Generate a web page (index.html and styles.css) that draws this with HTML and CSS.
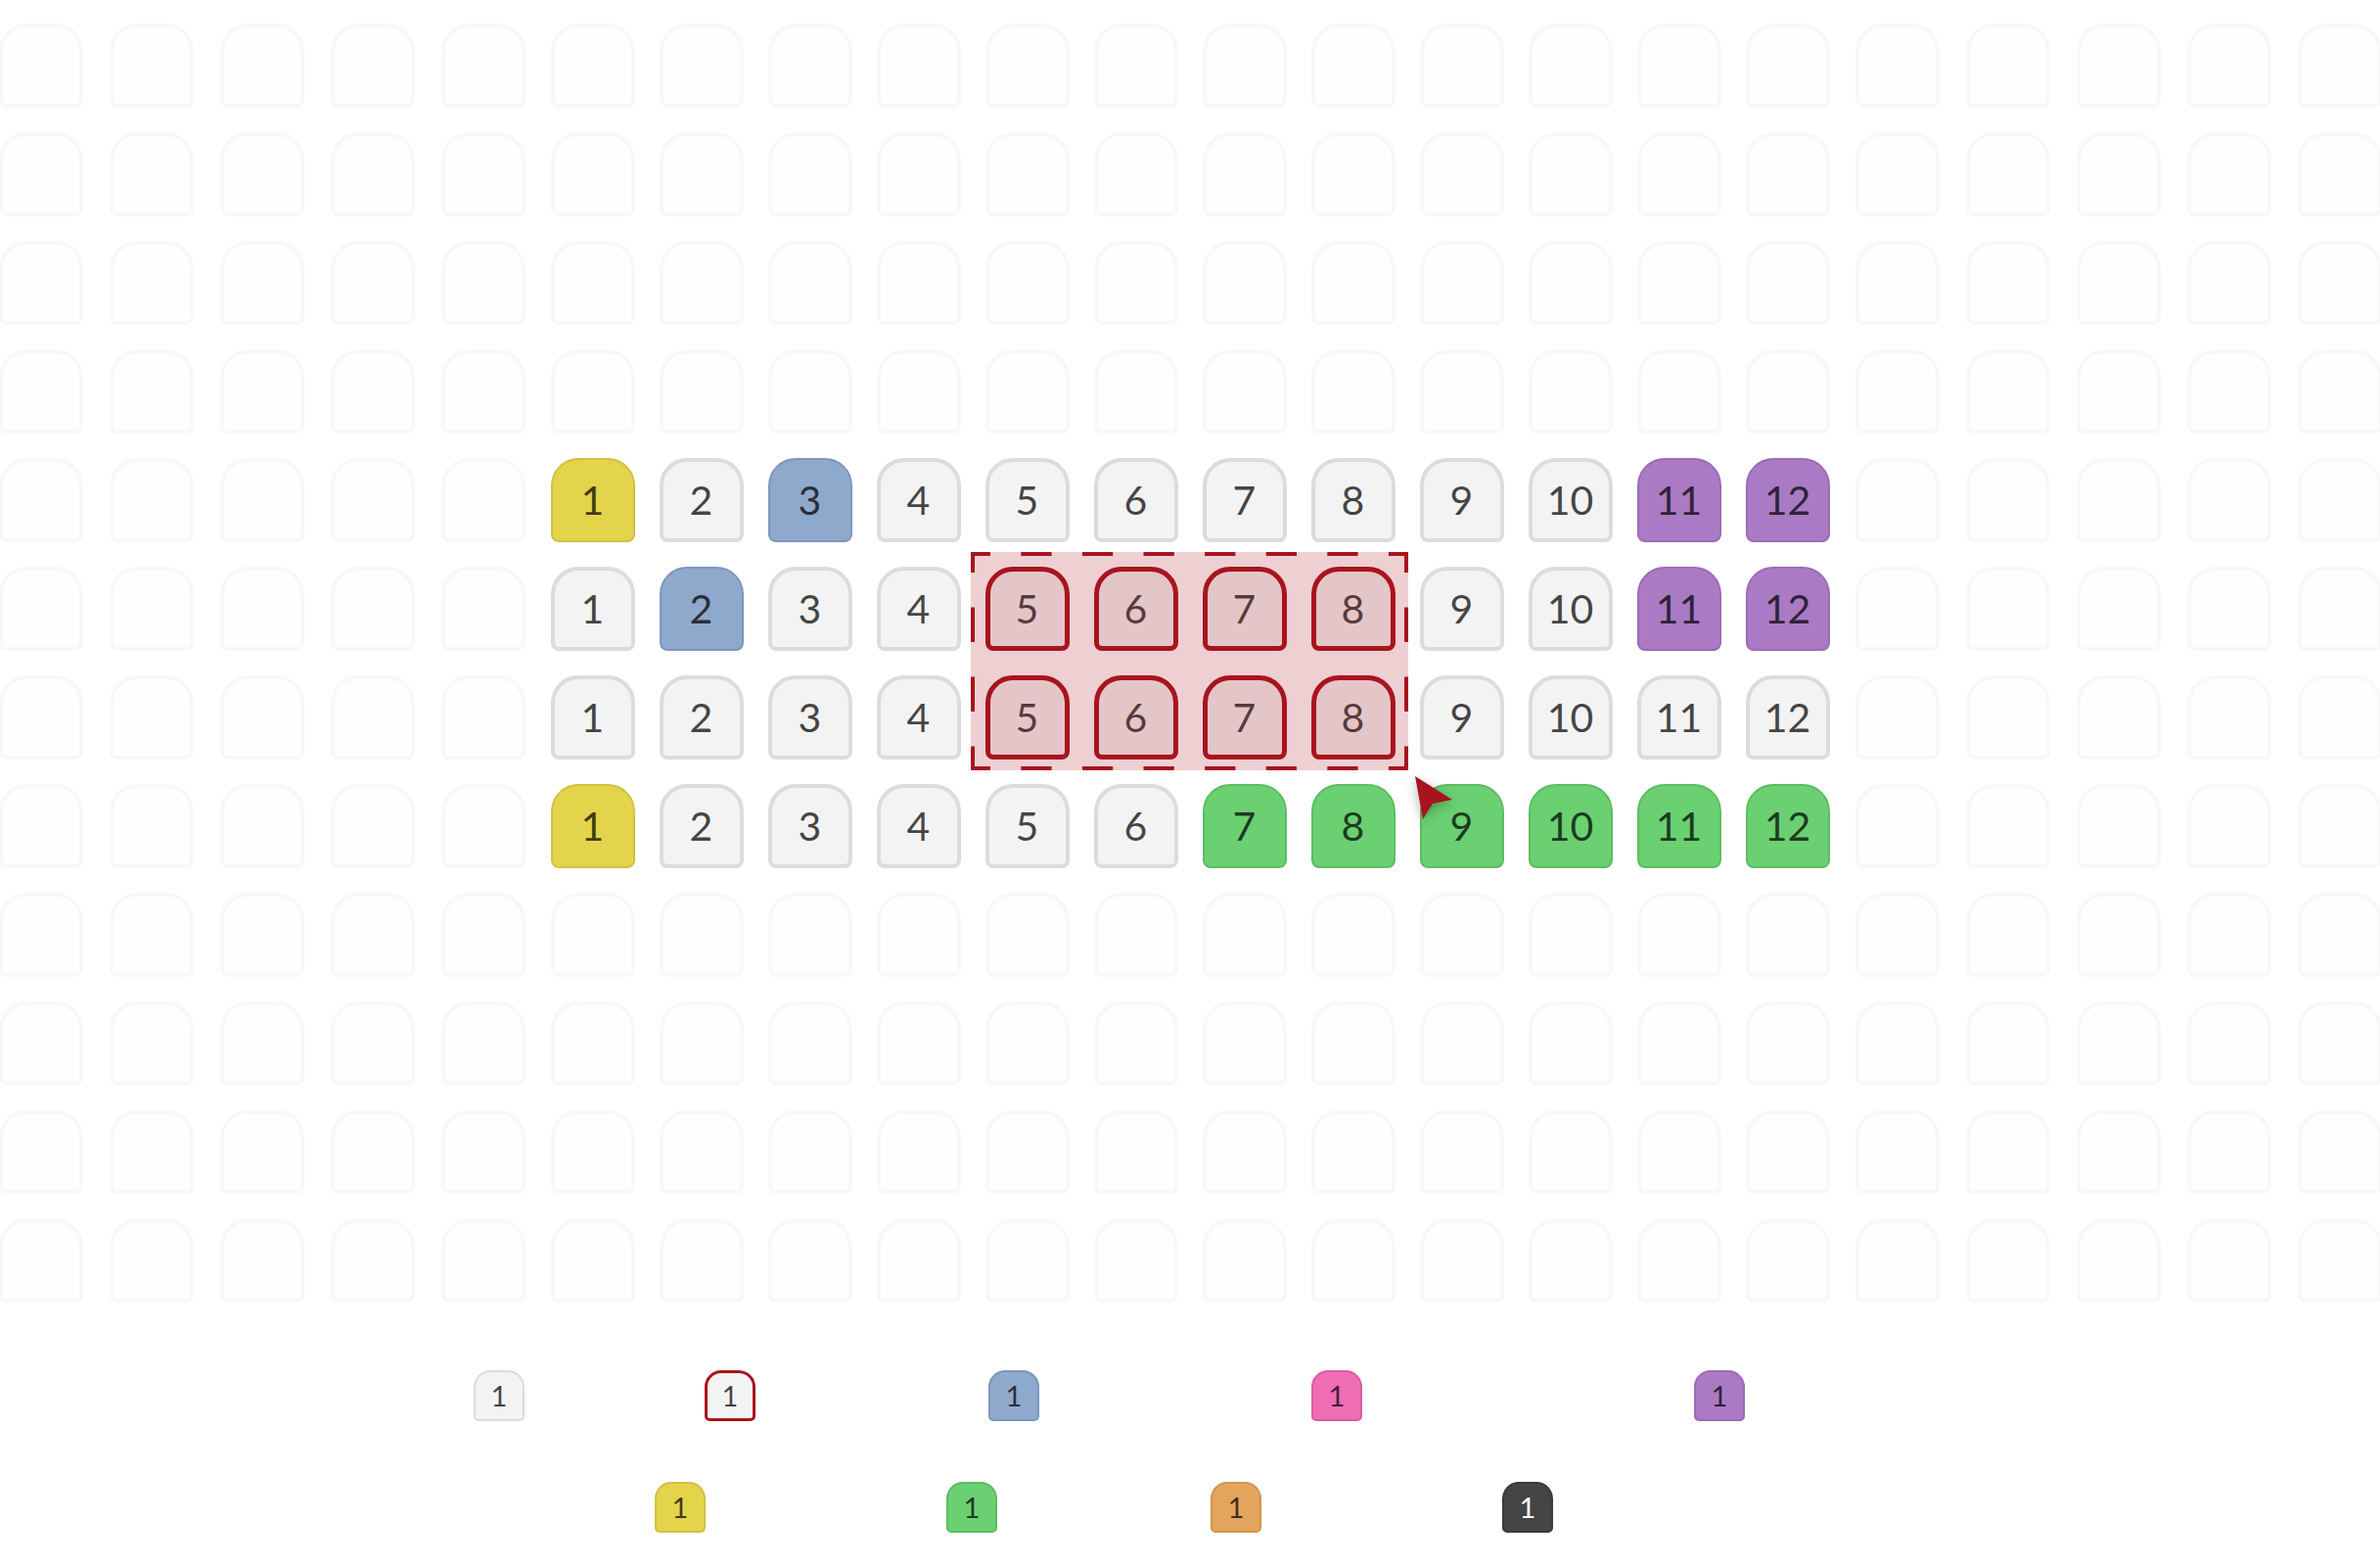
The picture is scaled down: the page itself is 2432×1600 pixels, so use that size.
FILE: index.html
```html
<!DOCTYPE html>
<html lang="en">
<head>
    <meta charset="UTF-8">
    <meta name="viewport" content="width=device-width, initial-scale=1.0">
    <title>Seat Map</title>
    <link rel="stylesheet" href="styles.css">
</head>
<body>
    <div class="hall">
        <div id="rows" class="rows">
            <!-- Rows are built by the script below -->
        </div>

        <!-- Drag selection box -->
        <svg class="marquee" width="447" height="223" viewBox="0 0 447 223">
            <rect class="marquee-fill" x="0" y="0" width="447" height="223" rx="2"></rect>
            <line class="marquee-h" x1="0" y1="2" x2="447" y2="2"></line>
            <line class="marquee-h" x1="0" y1="221" x2="447" y2="221"></line>
            <line class="marquee-v" x1="2" y1="0" x2="2" y2="223"></line>
            <line class="marquee-v" x1="445" y1="0" x2="445" y2="223"></line>
        </svg>

        <svg class="cursor" width="50" height="56" viewBox="0 0 50 56">
            <path d="M4 3 L42 27 L22 31 L12 47 Z"></path>
        </svg>
    </div>

    <div class="legend">
        <div class="legend-row">
            <div class="legend-item key-available"><div class="seat">1</div></div>
            <div class="legend-item key-selected"><div class="seat selected">1</div></div>
            <div class="legend-item key-reserved"><div class="seat blue">1</div></div>
            <div class="legend-item key-held"><div class="seat pink">1</div></div>
            <div class="legend-item key-vip"><div class="seat purple">1</div></div>
        </div>
        <div class="legend-row">
            <div class="legend-item key-accessible"><div class="seat yellow">1</div></div>
            <div class="legend-item key-sold"><div class="seat green">1</div></div>
            <div class="legend-item key-press"><div class="seat orange">1</div></div>
            <div class="legend-item key-blocked"><div class="seat dark">1</div></div>
        </div>
    </div>

    <script>
        // 12 seats per row in the middle block, null = empty row
        const layout = [
            null, null, null, null,
            'Y.B.......PP',
            '.B..SSSS..PP',
            '....SSSS....',
            'Y.....GGGGGG',
            null, null, null, null
        ];

        const kinds = {
            '.': '',
            'Y': 'yellow',
            'B': 'blue',
            'P': 'purple',
            'G': 'green',
            'S': 'selected'
        };

        function seat(cls, label) {
            return `<div class="seat ${cls}">${label}</div>`;
        }

        function wing() {
            return `<div class="wing">${seat('ghost', '').repeat(5)}</div>`;
        }

        function buildRows() {
            const rowsEl = document.getElementById('rows');

            rowsEl.innerHTML = layout.map(row => {
                let block = '';
                for (let i = 0; i < 12; i++) {
                    block += row ? seat(kinds[row[i]], i + 1) : seat('ghost', '');
                }
                return `
                    <div class="row">
                        ${wing()}
                        <div class="block">${block}</div>
                        ${wing()}
                    </div>
                `;
            }).join('');
        }

        buildRows();
    </script>
</body>
</html>
```

FILE: styles.css
```css
:root {
    --seat-bg: #f3f3f3;
    --seat-border: #dcdcdc;
    --red: #a8141e;
    --ink: rgba(0, 0, 0, 0.72);
}

* {
    margin: 0;
    padding: 0;
    box-sizing: border-box;
}

html,
body {
    overflow: hidden;
}

body {
    font-family: Lato, 'Open Sans', sans-serif;
    background: #ffffff;
    color: var(--ink);
    min-height: 100vh;
}

.hall {
    position: relative;
}

.rows {
    display: flex;
    flex-direction: column;
    gap: 25px;
    padding-top: 24px;
}

.row {
    display: flex;
    justify-content: center;
    gap: 26px;
}

.wing {
    display: flex;
    gap: 27px;
    flex: none;
}

.block {
    display: flex;
    gap: 25px;
    flex: none;
}

.seat {
    flex: none;
    width: 86px;
    height: 86px;
    display: flex;
    align-items: center;
    justify-content: center;
    padding-bottom: 2px;
    background: var(--seat-bg);
    border: 4px solid var(--seat-border);
    border-radius: 28px 28px 8px 8px;
    font-size: 41px;
    line-height: 1;
    color: var(--ink);
}

.seat.ghost {
    background: #fefefe;
    border-color: #f8f8f8;
}

.seat.selected {
    border: 5px solid var(--red);
}

.seat.yellow {
    background: #e4d44c;
    border: 2px solid #d0c140;
}

.seat.blue {
    background: #8fa9cd;
    border: 2px solid #7d96bd;
}

.seat.purple {
    background: #aa7bc4;
    border: 2px solid #9a6cb5;
}

.seat.green {
    background: #6bd072;
    border: 2px solid #5cbd62;
}

.seat.pink {
    background: #ef6db5;
    border: 2px solid #da5ea2;
}

.seat.orange {
    background: #e3a55c;
    border: 2px solid #cf9450;
}

.seat.dark {
    background: #444444;
    border: 2px solid #3a3a3a;
    color: #ffffff;
}

/* selection box drawn over the seats */
.marquee {
    position: absolute;
    left: 992px;
    top: 564px;
    pointer-events: none;
}

.marquee-fill {
    fill: rgba(168, 20, 30, 0.2);
}

.marquee-h,
.marquee-v {
    stroke: var(--red);
    stroke-width: 4;
}

.marquee-h {
    stroke-dasharray: 31.3 31.3;
    stroke-dashoffset: 11.3;
}

.marquee-v {
    stroke-dasharray: 35.5 35.5;
    stroke-dashoffset: 14.5;
}

.cursor {
    position: absolute;
    left: 1442px;
    top: 790px;
    overflow: visible;
    filter: drop-shadow(0 3px 6px rgba(0, 0, 0, 0.3));
}

.cursor path {
    fill: var(--red);
}

/* legend */
.legend {
    display: flex;
    flex-direction: column;
    gap: 62px;
    margin-top: 69px;
}

.legend-row {
    display: flex;
    justify-content: center;
}

.legend-item {
    display: flex;
    align-items: center;
    flex: none;
}

.legend .seat {
    width: 52px;
    height: 52px;
    padding-bottom: 1px;
    border-width: 2px;
    border-radius: 17px 17px 5px 5px;
    font-size: 29px;
}

.legend .seat.selected {
    border-width: 3px;
}

.key-available { width: 236px; }
.key-selected { width: 290px; }
.key-reserved { width: 330px; }
.key-held { width: 391px; }
.key-vip { width: 217px; }

.key-accessible { width: 298px; }
.key-sold { width: 270px; }
.key-press { width: 298px; }
.key-blocked { width: 228px; }
```
